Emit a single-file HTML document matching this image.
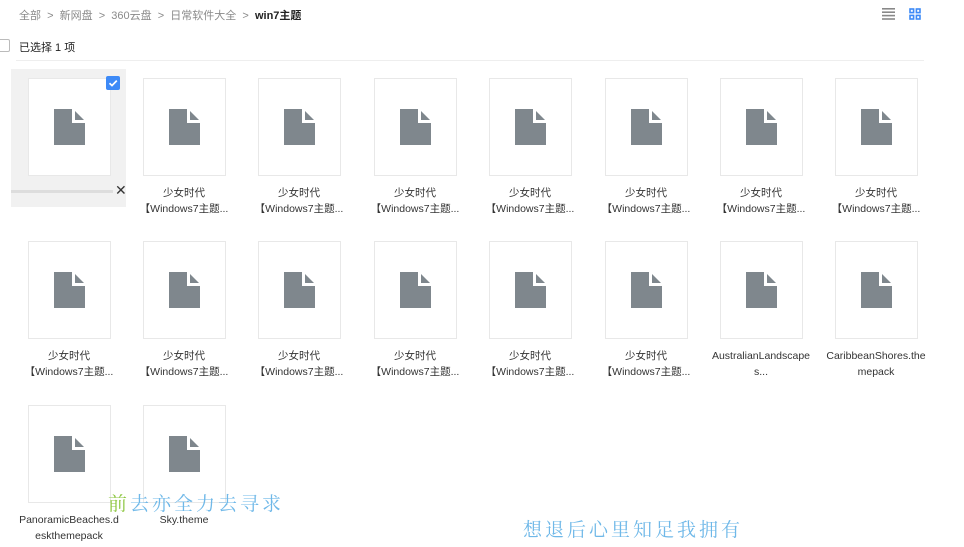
<!DOCTYPE html>
<html><head><meta charset="utf-8"><style>
body{margin:0;width:964px;height:547px;background:#fff;position:relative;overflow:hidden;font-family:"Liberation Sans","Noto Sans CJK SC",sans-serif;}
.a{position:absolute}
.card{position:absolute;width:81px;height:96px;border:1px solid #e8e8e8;background:#fff}
.card svg{position:absolute;left:25px;top:30px}
.lbl{position:absolute;width:116px;text-align:center;font-size:10.5px;line-height:16px;color:#333}
.bc{font-size:11px;color:#8a8a8a;top:7px}
</style></head><body>
<div class="a bc" style="left:19px">全部 &nbsp;&gt;&nbsp; 新网盘 &nbsp;&gt;&nbsp; 360云盘 &nbsp;&gt;&nbsp; 日常软件大全 &nbsp;&gt;&nbsp; <b style="color:#222">win7主题</b></div>
<svg class="a" style="left:882px;top:8px" width="13" height="12"><g fill="#888"><rect y="0" width="13" height="1.6"/><rect y="3.4" width="13" height="1.6"/><rect y="6.8" width="13" height="1.6"/><rect y="10.2" width="13" height="1.6"/></g></svg>
<svg class="a" style="left:909px;top:8px" width="12" height="12"><g fill="none" stroke="#3d8af7" stroke-width="1.6"><rect x="1" y="1" width="3.6" height="3.6"/><rect x="7.4" y="1" width="3.6" height="3.6"/><rect x="1" y="7.4" width="3.6" height="3.6"/><rect x="7.4" y="7.4" width="3.6" height="3.6"/></g></svg>
<div class="a" style="left:-3px;top:39px;width:11px;height:11px;border:1px solid #bbb;border-radius:2px"></div>
<div class="a" style="left:19px;top:39px;font-size:11px;color:#222">已选择 1 项</div>
<div class="a" style="left:16px;top:60px;width:908px;height:1px;background:#eee"></div>
<div class="a" style="left:11px;top:69px;width:115px;height:138px;background:#f1f1f1"></div>
<div class="a" style="left:11px;top:190px;width:102px;height:3px;background:#ddd"></div>
<div class="a" style="left:115px;top:182px;font-size:14px;color:#333">✕</div>
<div id="g"></div>
<div class="a" style="left:106px;top:76px;width:14px;height:14px;background:#3d8af7;border-radius:2px"><svg width="14" height="14"><path d="M3.5 7.2 L6 9.6 L10.8 4.6" stroke="#fff" stroke-width="1.7" fill="none"/></svg></div>
<div class="a" style="left:108px;top:489px;font-size:19px;letter-spacing:3px;color:#6fb8e8;font-family:'Noto Serif CJK SC',serif"><span style="color:#8cc63f">前</span>去亦全力去寻求</div>
<div class="a" style="left:523px;top:515px;font-size:19px;letter-spacing:3px;color:#6fb8e8;font-family:'Noto Serif CJK SC',serif">想退后心里知足我拥有</div>
<script>
var xs=[28,143,258,374,489,605,720,835],ys=[78,241,405];
var t="少女时代<br>【Windows7主题...";
var L=[];for(var i=0;i<14;i++)L.push(i==0?"":t);
L.push("AustralianLandscape<br>s...","CaribbeanShores.the<br>mepack","PanoramicBeaches.d<br>eskthemepack","Sky.theme");
var ic='<svg width="31" height="36"><path d="M0 0H18V14H31V36H0Z" fill="#7f878d"/><path d="M21 2V11H30Z" fill="#7f878d"/></svg>';
var h="";
for(var k=0;k<L.length;k++){var x=xs[k%8],y=ys[Math.floor(k/8)];
h+='<div class="card" style="left:'+x+'px;top:'+y+'px">'+ic+'</div>';
if(L[k])h+='<div class="lbl" style="left:'+(x-17)+'px;top:'+(y+107)+'px">'+L[k]+'</div>';}
document.getElementById("g").innerHTML=h;
</script>
</body></html>
